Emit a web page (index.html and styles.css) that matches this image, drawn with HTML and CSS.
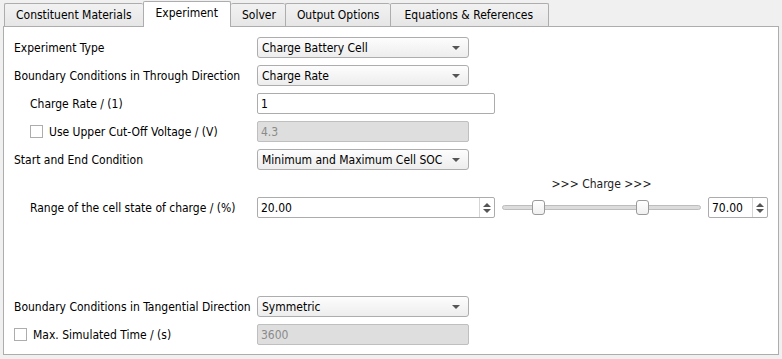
FILE: index.html
```html
<!DOCTYPE html>
<html>
<head>
<meta charset="utf-8">
<link rel="stylesheet" href="styles.css">
</head>
<body>
<div class="tabbar">
  <div class="tab">Constituent Materials</div>
  <div class="tab active">Experiment</div>
  <div class="tab">Solver</div>
  <div class="tab">Output Options</div>
  <div class="tab tab-last">Equations &amp; References</div>
</div>
<div class="panel">
  <div class="row">
    <div class="label">Experiment Type</div>
    <div class="combo">Charge Battery Cell<span class="arrow"></span></div>
  </div>
  <div class="row">
    <div class="label">Boundary Conditions in Through Direction</div>
    <div class="combo">Charge Rate<span class="arrow"></span></div>
  </div>
  <div class="row">
    <div class="label sub">Charge Rate / (1)</div>
    <div class="input wide">1</div>
  </div>
  <div class="row">
    <div class="label sub"><span class="check"></span>Use Upper Cut-Off Voltage / (V)</div>
    <div class="input disabled">4.3</div>
  </div>
  <div class="row">
    <div class="label">Start and End Condition</div>
    <div class="combo">Minimum and Maximum Cell SOC<span class="arrow"></span></div>
  </div>
  <div class="row caption-row">
    <div class="label"></div>
    <div class="spacer-wide"></div>
    <div class="caption">&gt;&gt;&gt; Charge &gt;&gt;&gt;</div>
  </div>
  <div class="row range-row">
    <div class="label sub">Range of the cell state of charge / (%)</div>
    <div class="input wide spin">20.00<span class="spin-btn"><span class="up"></span><span class="down"></span></span></div>
    <div class="slider">
      <div class="groove"></div>
      <span class="handle h1"></span>
      <span class="handle h2"></span>
    </div>
    <div class="input small spin">70.00<span class="spin-btn"><span class="up"></span><span class="down"></span></span></div>
  </div>
  <div class="fill"></div>
  <div class="row">
    <div class="label">Boundary Conditions in Tangential Direction</div>
    <div class="combo">Symmetric<span class="arrow"></span></div>
  </div>
  <div class="row last">
    <div class="label"><span class="check"></span>Max. Simulated Time / (s)</div>
    <div class="input disabled">3600</div>
  </div>
</div>
</body>
</html>
```
FILE: styles.css
```css
* { box-sizing: border-box; }
html, body { margin: 0; padding: 0; }
body {
  background: #f0f0f0;
  font-family: "DejaVu Sans Condensed", "DejaVu Sans", sans-serif;
  font-size: 12px;
  color: #000;
  width: 782px;
  height: 359px;
  overflow: hidden;
}
.tabbar {
  display: flex;
  align-items: flex-end;
  height: 26px;
  padding-left: 4px;
}
.tab {
  height: 23px;
  padding: 0 11px;
  display: flex;
  align-items: center;
  border: 1px solid #adadad;
  border-bottom: none;
  border-right: none;
  border-radius: 2px 2px 0 0;
  background: linear-gradient(#f2f2f2, #e6e6e6);
}
.tab.tab-last {
  border-right: 1px solid #adadad;
  padding: 0 15px 0 13px;
}
.tab.active {
  height: 26px;
  background: #fff;
  border-right: 1px solid #adadad;
  margin-bottom: -1px;
  position: relative;
  z-index: 1;
  padding: 0 12px 3px;
}
.tab.active + .tab { border-left: none; padding-right: 9px; }
.panel {
  margin: 0 3px;
  height: 329px;
  background: #fff;
  border: 1px solid #adadad;
  padding: 10px 0 0 10px;
  display: flex;
  flex-direction: column;
}
.row {
  display: flex;
  align-items: center;
  height: 21px;
  margin-bottom: 7px;
}
.label {
  width: 243px;
  flex: none;
  display: flex;
  align-items: center;
  white-space: nowrap;
}
.label.sub { padding-left: 16px; }
.check {
  width: 13px;
  height: 13px;
  border: 1px solid #adadad;
  background: #fff;
  margin-right: 6px;
  flex: none;
}
.combo {
  width: 212px;
  height: 21px;
  border: 1px solid #adadad;
  border-radius: 3px;
  background: linear-gradient(#fdfdfd, #ededed);
  padding-left: 4px;
  display: flex;
  align-items: center;
  position: relative;
}
.arrow {
  position: absolute;
  right: 8px;
  top: 8px;
  width: 0;
  height: 0;
  border-left: 4px solid transparent;
  border-right: 4px solid transparent;
  border-top: 4px solid #555;
}
.input {
  width: 212px;
  height: 21px;
  border: 1px solid #acacac;
  border-radius: 2px;
  background: #fff;
  padding-left: 3px;
  display: flex;
  align-items: center;
  position: relative;
}
.input.wide { width: 238px; }
.input.small { width: 60px; }
.input.disabled {
  background: #dedede;
  border-color: #bfbfbf;
  color: #8a8a8a;
}
.spin-btn {
  position: absolute;
  right: 0;
  top: 0;
  bottom: 0;
  width: 15px;
  border-left: 1px solid #d5d5d5;
  display: flex;
  flex-direction: column;
  align-items: center;
  justify-content: center;
  gap: 2px;
}
.up, .down {
  width: 0; height: 0;
  border-left: 4px solid transparent;
  border-right: 4px solid transparent;
}
.up { border-bottom: 4px solid #555; }
.down { border-top: 4px solid #555; }
.caption-row { height: 14px; margin-bottom: 6px; }
.spacer-wide { width: 245px; flex: none; }
.caption {
  width: 199px;
  text-align: center;
  color: #222;
  white-space: nowrap;
}
.slider {
  width: 199px;
  height: 21px;
  margin: 0 7px;
  position: relative;
  flex: none;
}
.groove {
  position: absolute;
  left: 0; right: 0;
  top: 8px;
  height: 5px;
  border: 1px solid #bdbdbd;
  border-radius: 3px;
  background: #dcdcdc;
}
.handle {
  position: absolute;
  top: 3px;
  width: 13px;
  height: 15px;
  border: 1px solid #9a9a9a;
  border-radius: 3px;
  background: linear-gradient(#ffffff, #f0f0f0);
}
.h1 { left: 30px; }
.h2 { left: 134px; }
.fill { flex: 1; }
.row.last { margin-bottom: 9px; }
```
